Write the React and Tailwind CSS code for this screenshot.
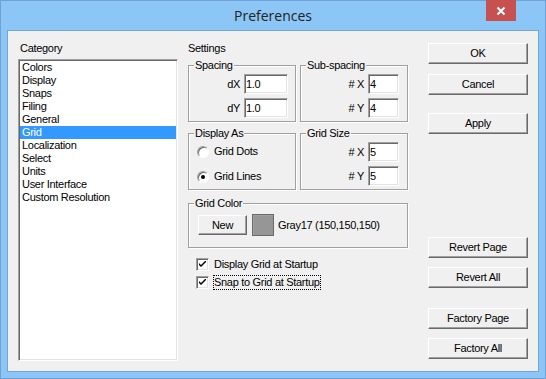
const sunken =
  'border border-t-[#a0a0a0] border-l-[#a0a0a0] border-r-white border-b-white shadow-[inset_1px_1px_0_#696969,inset_-1px_-1px_0_#e3e3e3]'
const raised =
  'border border-t-white border-l-white border-r-[#696969] border-b-[#696969] shadow-[inset_-1px_-1px_0_#a0a0a0] bg-[#f0f0f0]'

const categories = [
  'Colors', 'Display', 'Snaps', 'Filing', 'General', 'Grid',
  'Localization', 'Select', 'Units', 'User Interface', 'Custom Resolution',
]

function Group({ label, className = '', children }) {
  return (
    <div className={`relative border border-[#a0a0a0] shadow-[1px_1px_0_#fff,inset_1px_1px_0_#fff] ${className}`}>
      <span className="absolute -top-[7px] left-[5px] bg-[#f0f0f0] px-[1px] leading-[13px]">{label}</span>
      {children}
    </div>
  )
}

function Field({ label, value, w }) {
  return (
    <div className="flex items-center justify-end gap-[4px]">
      <span className="leading-[13px]">{label}</span>
      <div className={`${sunken} ${w} h-[20px] bg-white pl-[1px] flex items-center leading-[13px]`}>{value}</div>
    </div>
  )
}

function Button({ children, className = '' }) {
  return (
    <div className={`${raised} w-[100px] h-[21px] flex items-center justify-center leading-[13px] ${className}`}>
      {children}
    </div>
  )
}

function Radio({ checked, label }) {
  return (
    <div className="flex items-center gap-[5px] h-[13px]">
      <div className="w-[12px] h-[12px] rounded-full border border-t-[#a0a0a0] border-l-[#a0a0a0] border-r-white border-b-white bg-white shadow-[inset_1px_1px_0_#696969] flex items-center justify-center">
        {checked && <div className="w-[4px] h-[4px] rounded-full bg-black" />}
      </div>
      <span className="leading-[13px]">{label}</span>
    </div>
  )
}

function Check({ label, focus }) {
  return (
    <div className="flex items-center gap-[5px] h-[13px]">
      <div className={`${sunken} w-[13px] h-[13px] bg-white flex items-center justify-center`}>
        <svg width="7" height="7" viewBox="0 0 7 7">
          <path d="M0 2 L0 4 L2 6 L7 1 L7 -1 L2 4 Z" fill="#000" />
        </svg>
      </div>
      <span className={`leading-[13px] ${focus ? 'outline outline-1 outline-dotted outline-black' : ''}`}>{label}</span>
    </div>
  )
}

export default function App() {
  return (
    <div className="w-[546px] h-[379px] bg-[#8bc6f7] border border-[#6fa1d4] text-[11px] tracking-[-0.3px] text-black" style={{ fontFamily: '"Liberation Sans", Arial, sans-serif' }}>
      {/* Title bar */}
      <div className="relative h-[29px] flex items-center justify-center">
        <span className="text-[14px] tracking-normal text-[#222] pb-[1px]" style={{ fontFamily: '"Open Sans", sans-serif' }}>Preferences</span>
        <div className="absolute -top-[1px] right-[29px] w-[30px] h-[21px] bg-[#c75050] flex items-center justify-center">
          <svg width="10" height="10" viewBox="0 0 10 10">
            <path d="M1.5 1.5 L8.5 8.5 M8.5 1.5 L1.5 8.5" stroke="#fff" strokeWidth="2" />
          </svg>
        </div>
      </div>

      {/* Client */}
      <div className="ml-[6px] w-[532px] h-[342px] border border-[#73a6d8] bg-[#f0f0f0] flex pl-[10px] pt-[11px]">
        {/* Category */}
        <div className="w-[160px] flex flex-col">
          <div className="pl-[2px] leading-[13px]">Category</div>
          <div className={`${sunken} mt-[4px] h-[302px] bg-white pt-[1px] px-[1px]`}>
            {categories.map((c) => (
              <div key={c} className={`h-[13px] leading-[13px] pl-[2px] ${c === 'Grid' ? 'bg-[#3399ff] text-white' : ''}`}>{c}</div>
            ))}
          </div>
        </div>

        {/* Settings */}
        <div className="ml-[10px] w-[220px] flex flex-col">
          <div className="leading-[13px]">Settings</div>
          <div className="mt-[10px] flex gap-[4px]">
            <Group label="Spacing" className="w-[108px] h-[57px] pt-[8px] pr-[7px] flex flex-col gap-[4px]">
              <Field label="dX" value="1.0" w="w-[44px]" />
              <Field label="dY" value="1.0" w="w-[44px]" />
            </Group>
            <Group label="Sub-spacing" className="w-[108px] h-[57px] pt-[8px] pr-[8px] flex flex-col gap-[4px]">
              <Field label="# X" value="4" w="w-[31px]" />
              <Field label="# Y" value="4" w="w-[31px]" />
            </Group>
          </div>
          <div className="mt-[11px] flex gap-[4px]">
            <Group label="Display As" className="w-[108px] h-[57px] pt-[11px] pl-[8px] flex flex-col gap-[12px]">
              <Radio label="Grid Dots" />
              <Radio checked label="Grid Lines" />
            </Group>
            <Group label="Grid Size" className="w-[108px] h-[57px] pt-[8px] pr-[8px] flex flex-col gap-[4px]">
              <Field label="# X" value="5" w="w-[31px]" />
              <Field label="# Y" value="5" w="w-[31px]" />
            </Group>
          </div>
          <Group label="Grid Color" className="mt-[13px] w-[220px] h-[45px] pt-[10px] pl-[9px] flex items-start gap-[5px]">
            <div className={`${raised} mt-[1px] w-[49px] h-[20px] flex items-center justify-center leading-[13px]`}>New</div>
            <div className="w-[22px] h-[22px] border border-[#696969] bg-[#969696] shadow-[inset_1px_1px_0_#a0a0a0]" />
            <span className="leading-[22px] ml-[-1px]">Gray17 (150,150,150)</span>
          </Group>
          <div className="mt-[10px] pl-[8px] flex flex-col gap-[5px]">
            <Check label="Display Grid at Startup" />
            <Check focus label="Snap to Grid at Startup" />
          </div>
        </div>

        {/* Buttons */}
        <div className="ml-[20px] w-[100px] flex flex-col">
          <Button className="mt-[1px]">OK</Button>
          <Button className="mt-[10px]">Cancel</Button>
          <Button className="mt-[18px]">Apply</Button>
          <Button className="mt-[103px]">Revert Page</Button>
          <Button className="mt-[9px]">Revert All</Button>
          <Button className="mt-[20px]">Factory Page</Button>
          <Button className="mt-[9px]">Factory All</Button>
        </div>
      </div>
    </div>
  )
}
